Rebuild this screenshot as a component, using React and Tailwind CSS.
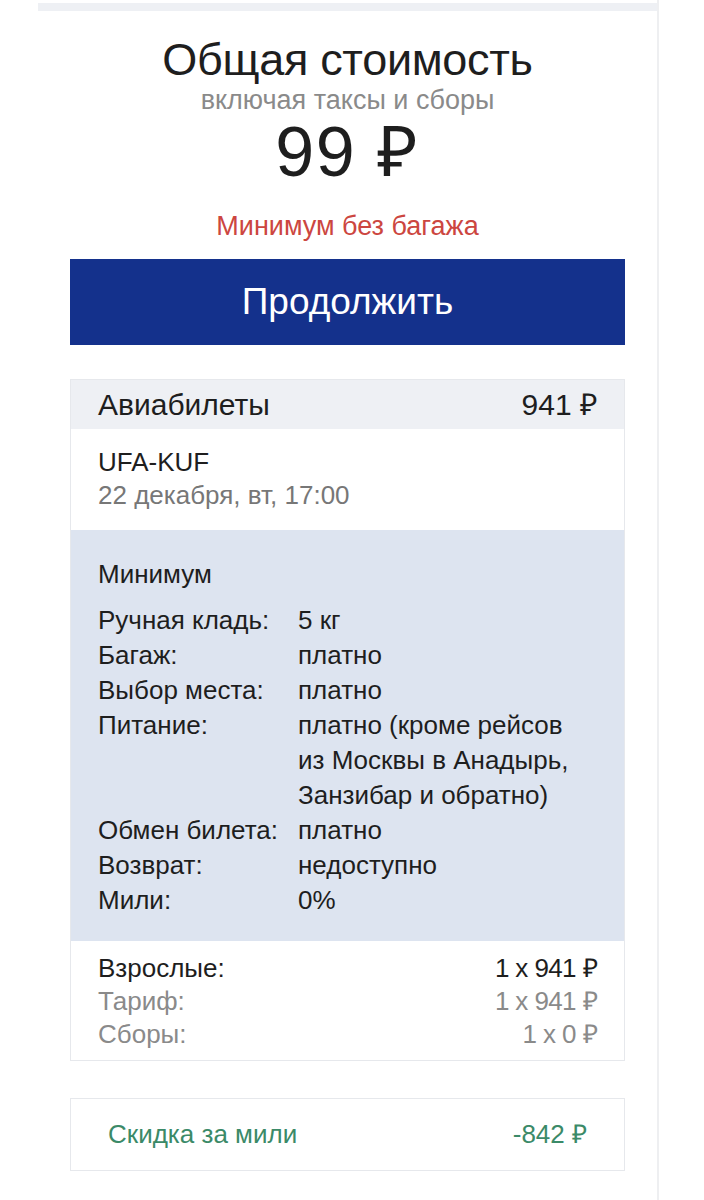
import React from 'react';

const conditions = [
    { label: 'Ручная кладь:', value: '5 кг' },
    { label: 'Багаж:', value: 'платно' },
    { label: 'Выбор места:', value: 'платно' },
    { label: 'Питание:', value: 'платно (кроме рейсов из Москвы в Анадырь, Занзибар и обратно)' },
    { label: 'Обмен билета:', value: 'платно' },
    { label: 'Возврат:', value: 'недоступно' },
    { label: 'Мили:', value: '0%' }
];

const prices = [
    { label: 'Взрослые:', value: '1 x 941 ₽', strong: true },
    { label: 'Тариф:', value: '1 x 941 ₽' },
    { label: 'Сборы:', value: '1 x 0 ₽' }
];

export default function App() {
    return (
        <div className="min-h-[1200px] bg-white font-['Liberation_Sans',Arial,sans-serif] text-[#1e1e1e]">
            <div className="ml-[38px] w-[621px] min-h-[1200px] border-r-2 border-[#eeeff1] pt-[3px]">
                <div className="h-[8px] bg-[#eef0f4]" />

                {/* Total */}
                <div className="px-[32px] flex flex-col items-center text-center">
                    <h1 className="mt-[23px] text-[45px] leading-[52px] tracking-[-0.3px]">Общая стоимость</h1>
                    <p className="text-[27px] leading-[28px] text-[#8a8a8a]">включая таксы и сборы</p>
                    <p className="mt-[2px] text-[70px] leading-[72px] tracking-[1.5px]">99 ₽</p>
                    <p className="mt-[24px] text-[27px] leading-[28px] text-[#cc4640]">Минимум без багажа</p>
                </div>

                <div className="px-[32px]">
                    <button className="mt-[19px] w-full h-[86px] bg-[#14318c] text-white text-[37px] font-medium">
                        Продолжить
                    </button>

                    {/* Ticket */}
                    <div className="mt-[34px] border border-[#e6e8ec]">
                        <div className="h-[49px] px-[27px] flex items-center justify-between bg-[#eef0f4] text-[30px]">
                            <span>Авиабилеты</span>
                            <span>941 ₽</span>
                        </div>
                        <div className="h-[101px] px-[27px] pt-[17px] text-[26px] leading-[33px]">
                            <div>UFA-KUF</div>
                            <div className="text-[#777]">22 декабря, вт, 17:00</div>
                        </div>
                        <div className="bg-[#dde4f0] px-[27px] pt-[27px] pb-[23px] text-[26px] leading-[35px]">
                            <div className="mb-[11px]">Минимум</div>
                            {conditions.map((row) => (
                                <div key={row.label} className="flex">
                                    <span className="w-[200px] shrink-0 whitespace-nowrap">{row.label}</span>
                                    <span className="w-[272px]">{row.value}</span>
                                </div>
                            ))}
                        </div>
                        <div className="px-[27px] pt-[11px] pb-[9px] text-[26px] leading-[33px]">
                            {prices.map((row) => (
                                <div key={row.label} className={`flex justify-between ${row.strong ? 'text-[#1e1e1e]' : 'text-[#8a8a8a]'}`}>
                                    <span>{row.label}</span>
                                    <span className="tracking-[-0.6px]">{row.value}</span>
                                </div>
                            ))}
                        </div>
                    </div>

                    {/* Miles discount */}
                    <div className="mt-[37px] h-[73px] border border-[#e6e8ec] px-[37px] flex items-center justify-between text-[26px] text-[#3b8a68]">
                        <span>Скидка за мили</span>
                        <span>-842 ₽</span>
                    </div>
                </div>
            </div>
        </div>
    );
}
